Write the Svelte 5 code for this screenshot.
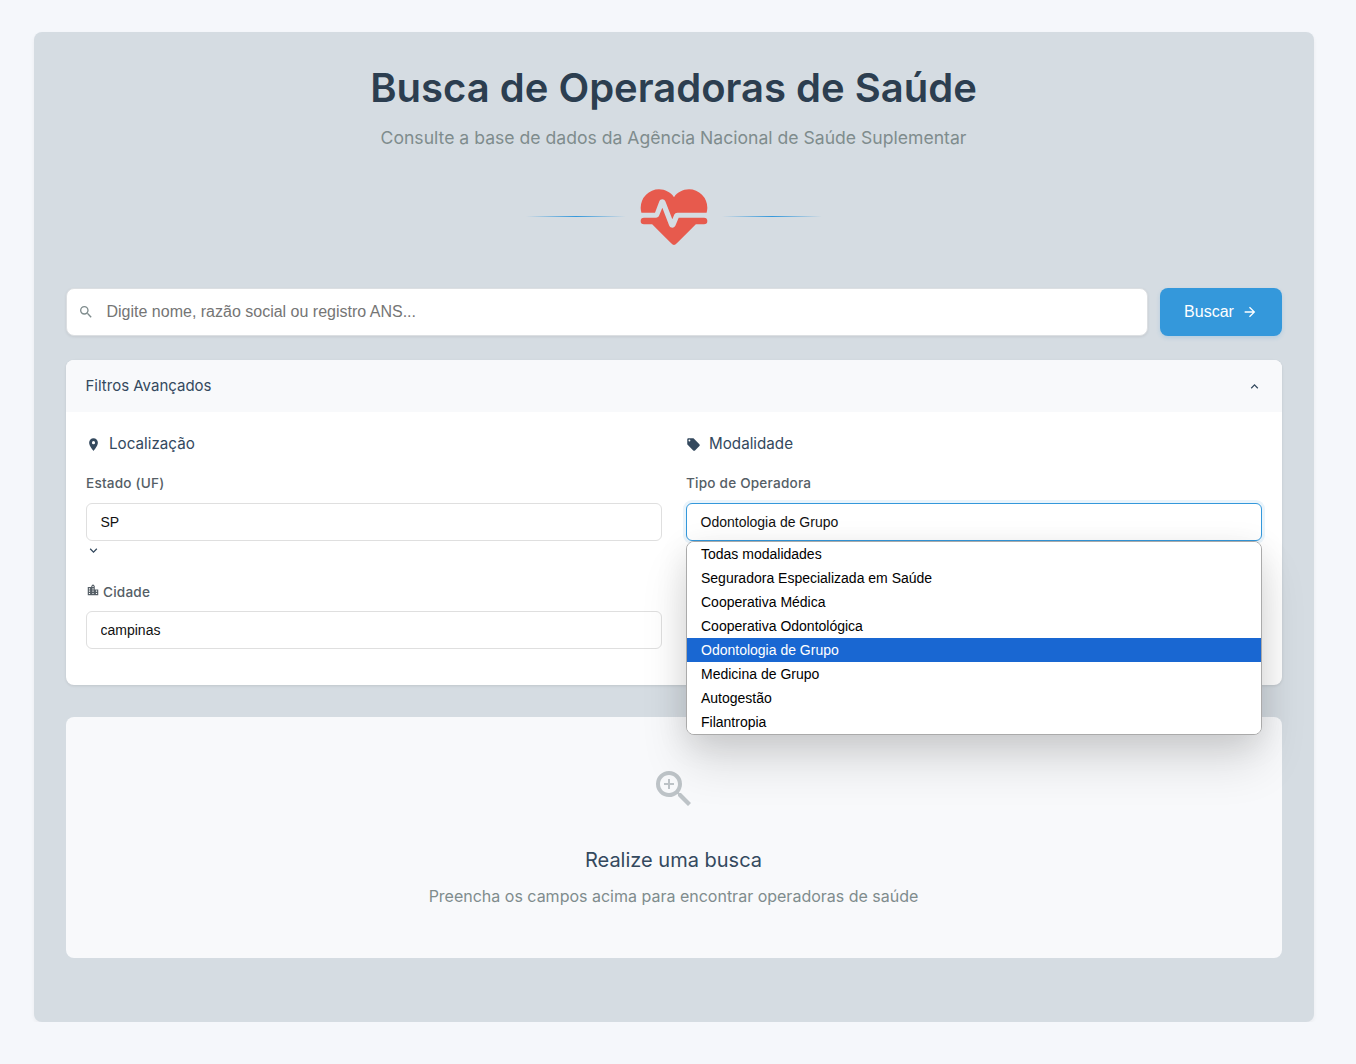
<script>
  const icons = {
    pulse: 'M7.5,4A5.5,5.5 0 0,0 2,9.5C2,10 2.09,10.5 2.22,11H6.3L7.57,7.63C7.87,6.83 9.05,6.75 9.43,7.63L11.5,13L12.09,11.58C12.22,11.25 12.57,11 13,11H21.78C21.91,10.5 22,10 22,9.5A5.5,5.5 0 0,0 16.5,4C14.64,4 13,4.93 12,6.34C11,4.93 9.36,4 7.5,4V4M3,12.5A1,1 0 0,0 2,13.5A1,1 0 0,0 3,14.5H5.44L11,20C12,20.9 12,20.9 13,20L18.56,14.5H21A1,1 0 0,0 22,13.5A1,1 0 0,0 21,12.5H13.4L12.47,14.8C12.07,15.81 10.92,15.67 10.55,14.83L8.5,9.5L7.54,11.83C7.39,12.21 7.05,12.5 6.6,12.5H3Z',
    magnify: 'M9.5,3A6.5,6.5 0 0,1 16,9.5C16,11.11 15.41,12.59 14.44,13.73L14.71,14H15.5L20.5,19L19,20.5L14,15.5V14.71L13.73,14.44C12.59,15.41 11.11,16 9.5,16A6.5,6.5 0 0,1 3,9.5A6.5,6.5 0 0,1 9.5,3M9.5,5C7,5 5,7 5,9.5C5,12 7,14 9.5,14C12,14 14,12 14,9.5C14,7 12,5 9.5,5Z',
    magnifyPlus: 'M15.5,14L20.5,19L19,20.5L14,15.5V14.71L13.73,14.44C12.59,15.41 11.11,16 9.5,16A6.5,6.5 0 0,1 3,9.5A6.5,6.5 0 0,1 9.5,3A6.5,6.5 0 0,1 16,9.5C16,11.11 15.41,12.59 14.44,13.73L14.71,14H15.5M9.5,14C12,14 14,12 14,9.5C14,7 12,5 9.5,5C7,5 5,7 5,9.5C5,12 7,14 9.5,14M12,10H10V12H9V10H7V9H9V7H10V9H12V10Z',
    arrow: 'M4,11V13H16L10.5,18.5L11.92,19.92L19.84,12L11.92,4.08L10.5,5.5L16,11H4Z',
    up: 'M7.41,15.41L12,10.83L16.59,15.41L18,14L12,8L6,14L7.41,15.41Z',
    down: 'M7.41,8.58L12,13.17L16.59,8.58L18,10L12,16L6,10L7.41,8.58Z',
    marker: 'M12,11.5A2.5,2.5 0 0,1 9.5,9A2.5,2.5 0 0,1 12,6.5A2.5,2.5 0 0,1 14.5,9A2.5,2.5 0 0,1 12,11.5M12,2A7,7 0 0,0 5,9C5,14.25 12,22 12,22C12,22 19,14.25 19,9A7,7 0 0,0 12,2Z',
    tag: 'M5.5,7A1.5,1.5 0 0,1 4,5.5A1.5,1.5 0 0,1 5.5,4A1.5,1.5 0 0,1 7,5.5A1.5,1.5 0 0,1 5.5,7M21.41,11.58L12.41,2.58C12.05,2.22 11.55,2 11,2H4C2.89,2 2,2.89 2,4V11C2,11.55 2.22,12.05 2.59,12.41L11.58,21.41C11.95,21.77 12.45,22 13,22C13.55,22 14.05,21.77 14.41,21.41L21.41,14.41C21.78,14.05 22,13.55 22,13C22,12.44 21.77,11.94 21.41,11.58Z',
    city: 'M19,15H17V13H19M19,19H17V17H19M13,7H11V5H13M13,11H11V9H13M13,15H11V13H13M13,19H11V17H13M7,11H5V9H7M7,15H5V13H7M7,19H5V17H7M15,11V5L12,2L9,5V7H3V21H21V11H15Z',
  };
  const options = [
    'Todas modalidades',
    'Seguradora Especializada em Saúde',
    'Cooperativa Médica',
    'Cooperativa Odontológica',
    'Odontologia de Grupo',
    'Medicina de Grupo',
    'Autogestão',
    'Filantropia',
  ];
  let query = $state('');
  let city = $state('campinas');
  let selected = $state('Odontologia de Grupo');
</script>

{#snippet icon(name, cls)}
  <svg class="icon {cls}" viewBox="0 0 24 24" aria-hidden="true"><path d={icons[name]} /></svg>
{/snippet}

<main class="container">
  <header>
    <h1>Busca de Operadoras de Saúde</h1>
    <p class="subtitle">Consulte a base de dados da Agência Nacional de Saúde Suplementar</p>
    <div class="divider">
      <span class="line"></span>
      {@render icon('pulse', 'i-pulse')}
      <span class="line"></span>
    </div>
  </header>

  <form class="search">
    <label class="search-box">
      {@render icon('magnify', 'i-search')}
      <input bind:value={query} placeholder="Digite nome, razão social ou registro ANS..." />
    </label>
    <button type="button" class="submit">Buscar {@render icon('arrow', 'i-16')}</button>
  </form>

  <section class="filters">
    <div class="filters-head">
      <span>Filtros Avançados</span>
      {@render icon('up', 'i-15')}
    </div>
    <div class="filters-body">
      <div class="group">
        <h2>{@render icon('marker', 'i-15')}<span>Localização</span></h2>
        <div class="label">Estado (UF)</div>
        <div class="field">SP</div>
        <div class="chevron">{@render icon('down', 'i-15')}</div>
        <label class="label" for="city">{@render icon('city', 'i-city')}<span>Cidade</span></label>
        <input id="city" class="field" bind:value={city} />
      </div>
      <div class="group">
        <h2>{@render icon('tag', 'i-15')}<span>Modalidade</span></h2>
        <div class="label">Tipo de Operadora</div>
        <div class="select">
          <div class="field active">{selected}</div>
          <div class="menu" role="listbox">
            {#each options as option}
              <button
                type="button"
                class="option"
                class:selected={option === selected}
                role="option"
                aria-selected={option === selected}
                onclick={() => (selected = option)}>{option}</button>
            {/each}
          </div>
        </div>
      </div>
    </div>
  </section>

  <section class="empty">
    {@render icon('magnifyPlus', 'i-empty')}
    <h3>Realize uma busca</h3>
    <p>Preencha os campos acima para encontrar operadoras de saúde</p>
  </section>
</main>

<style>
  :global(body) {
    margin: 0;
    background: #f5f7fb;
    font-family: Inter, 'Liberation Sans', sans-serif;
    color: #34495e;
  }
  :global(*) {
    box-sizing: border-box;
  }
  .container {
    width: 1280px;
    height: 990px;
    margin: 32px 0 0 34px;
    padding: 32px;
    border-radius: 8px;
    background: #d5dce2;
    box-shadow: 0 2px 4px rgba(0, 0, 0, 0.05);
  }
  h1, h2, h3, p {
    margin: 0;
  }
  .icon {
    display: block;
    flex: none;
    fill: currentColor;
  }
  .icon:global(.i-16) {
    width: 16px;
    height: 16px;
  }
  .icon:global(.i-15) {
    width: 15px;
    height: 15px;
  }
  .icon:global(.i-pulse) {
    width: 80px;
    height: 80px;
    color: #e75a4d;
  }
  .icon:global(.i-search) {
    width: 16px;
    height: 16px;
    color: #7f8c8d;
  }
  .icon:global(.i-city) {
    width: 14px;
    height: 14px;
    margin-bottom: 4px;
  }
  .icon:global(.i-empty) {
    width: 48px;
    height: 48px;
    color: #bdc3c7;
  }
  header {
    height: 224px;
    text-align: center;
  }
  h1 {
    height: 48px;
    margin-left: -1px;
    font-size: 40px;
    line-height: 48px;
    font-weight: 600;
    color: #2c3e50;
  }
  .subtitle {
    margin: 12px 0 0 -1px;
    font-size: 17.6px;
    line-height: 28px;
    color: #7f8c8d;
  }
  .divider {
    display: flex;
    justify-content: center;
    align-items: center;
    gap: 8px;
    margin-top: 24px;
  }
  .line {
    width: 100px;
    height: 1px;
    background: linear-gradient(90deg, transparent, #3498db, transparent);
  }
  .search {
    display: flex;
    gap: 12px;
    height: 48px;
  }
  .search-box {
    flex: 1;
    display: flex;
    align-items: center;
    gap: 12.5px;
    padding-left: 11px;
    border: 1px solid #dcdfe2;
    border-radius: 8px;
    background: #fff;
    box-shadow: 0 1px 3px rgba(0, 0, 0, 0.08);
  }
  .search-box input {
    flex: 1;
    padding: 0;
    border: 0;
    outline: 0;
    background: none;
    font: 16px 'Liberation Sans', Arial, sans-serif;
  }
  .search-box input::placeholder {
    color: #757575;
  }
  .submit {
    width: 122px;
    display: flex;
    align-items: center;
    justify-content: center;
    gap: 8px;
    padding: 0;
    border: 0;
    border-radius: 8px;
    background: #3498db;
    color: #fff;
    font: 500 16px 'Liberation Sans', Arial, sans-serif;
    box-shadow: 0 2px 4px rgba(52, 152, 219, 0.2);
  }
  .filters {
    height: 325px;
    margin-top: 24px;
    border-radius: 8px;
    background: #fff;
    box-shadow: 0 1px 3px rgba(0, 0, 0, 0.1);
  }
  .filters-head {
    height: 52px;
    display: flex;
    align-items: center;
    justify-content: space-between;
    padding: 0 20px 0 19.5px;
    border-radius: 8px 8px 0 0;
    background: #f8f9fb;
    font-size: 15px;
  }
  .filters-head span {
    padding-bottom: 1px;
  }
  .filters-body {
    display: grid;
    grid-template-columns: 1fr 1fr;
    gap: 24px;
    padding: 20px;
  }
  h2 {
    display: flex;
    align-items: center;
    gap: 8px;
    height: 24px;
    font-size: 15.2px;
    font-weight: 400;
  }
  h2 span {
    padding-bottom: 1px;
  }
  .label {
    display: flex;
    align-items: center;
    gap: 3px;
    height: 22px;
    margin: 16px 0 9px;
    font-size: 13.6px;
    font-weight: 500;
    letter-spacing: 0.2px;
    color: #555e66;
  }
  .field {
    display: block;
    width: 100%;
    height: 38px;
    padding: 0 13.5px;
    border: 1px solid #dfdfdf;
    border-radius: 6px;
    outline: 0;
    background: #fff;
    color: #111;
    font: 14px/36px 'Liberation Sans', Arial, sans-serif;
  }
  .chevron {
    height: 23px;
    padding-top: 2px;
    margin-bottom: 17px;
  }
  .chevron + .label {
    margin-bottom: 8px;
  }
  .select {
    position: relative;
  }
  .active {
    border-color: #3498db;
    box-shadow: 0 0 0 3px rgba(52, 152, 219, 0.1);
  }
  .menu {
    position: absolute;
    top: 38px;
    left: 0;
    width: 100%;
    padding: 0;
    border: 1px solid #aaa;
    border-radius: 8px;
    background: #fff;
    overflow: hidden;
    box-shadow: 0 28px 48px rgba(0, 0, 0, 0.12), 0 8px 32px rgba(0, 0, 0, 0.1);
  }
  .option {
    display: block;
    width: 100%;
    height: 24px;
    padding: 0 14px;
    border: 0;
    background: #fff;
    color: #000;
    text-align: left;
    font: 14px/24px 'Liberation Sans', Arial, sans-serif;
  }
  .selected {
    background: #1967d2;
    color: #fff;
  }
  .empty {
    height: 241px;
    margin-top: 32px;
    padding-top: 48px;
    display: flex;
    flex-direction: column;
    align-items: center;
    border-radius: 8px;
    background: #f8f9fb;
  }
  h3 {
    margin: 31px 0 0 -1px;
    font-size: 20px;
    line-height: 32px;
    font-weight: 400;
  }
  .empty p {
    margin: 7px 0 0 -1px;
    font-size: 16px;
    line-height: 26px;
    color: #7f8c8d;
  }
</style>
